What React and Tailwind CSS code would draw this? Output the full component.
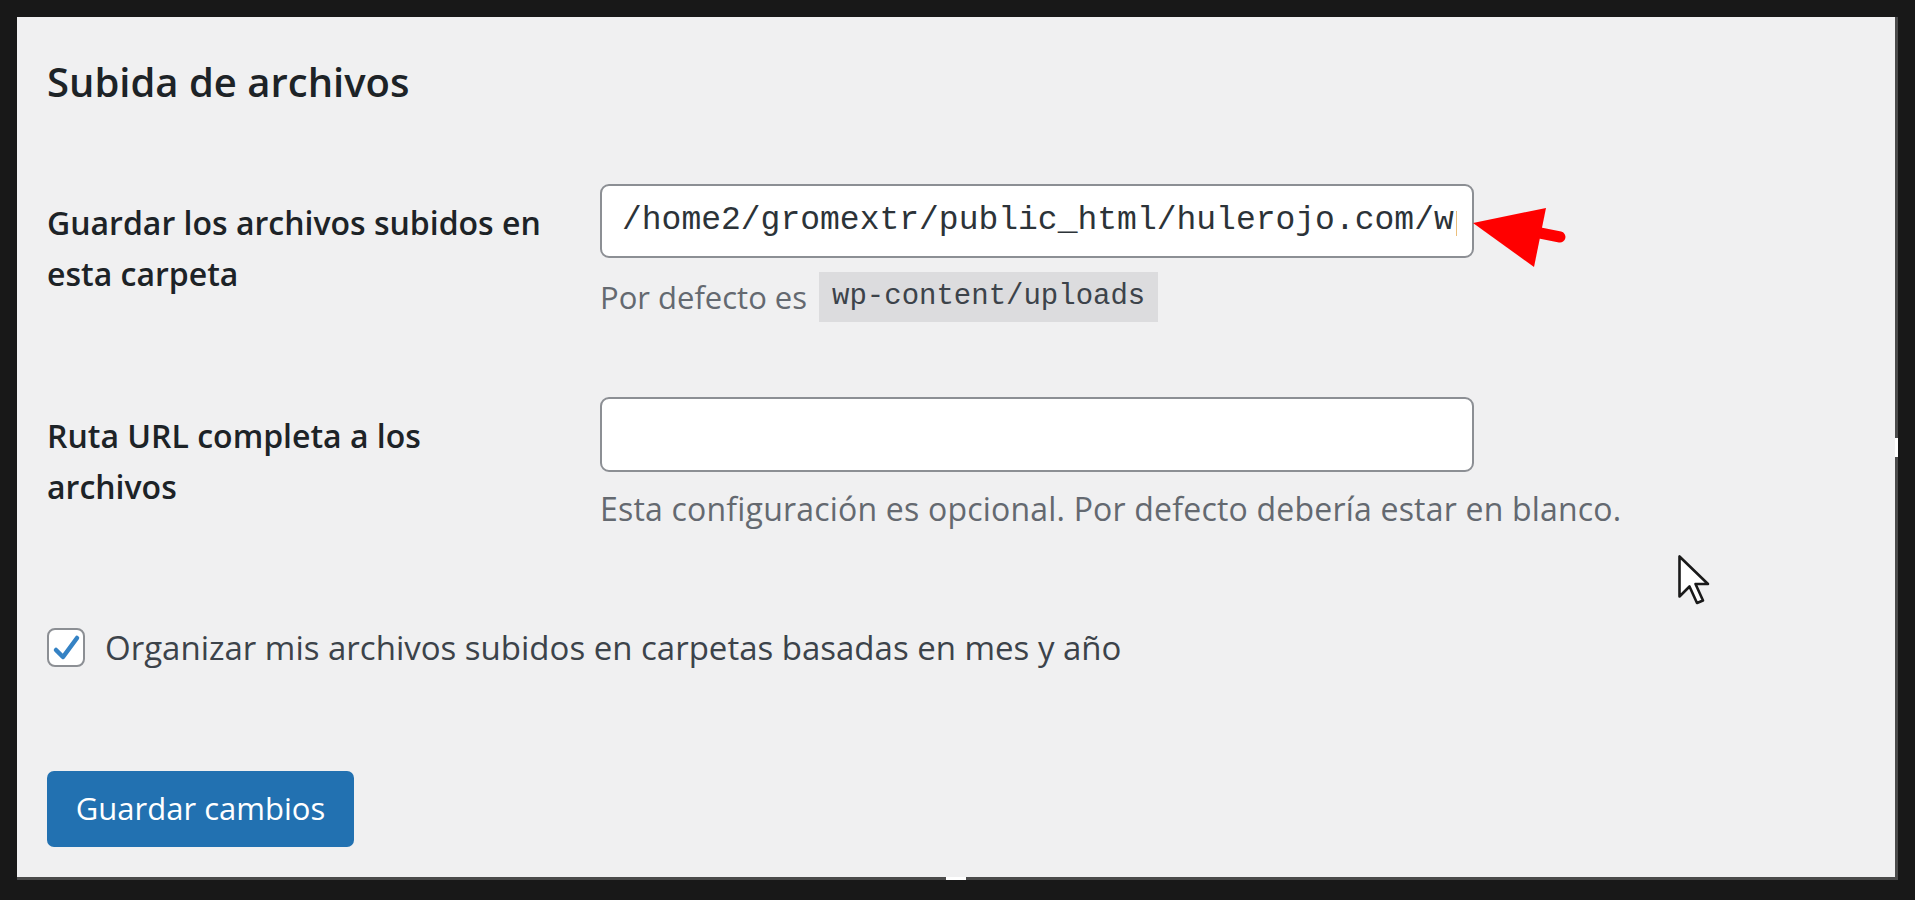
import React from "react";

const sans = { fontFamily: '"Open Sans", "Noto Sans", sans-serif' };
const mono = { fontFamily: '"Liberation Mono", monospace' };

const Arrow = () => (
  <svg className="absolute left-[1439px] top-[173px]" width="120" height="90" viewBox="0 0 120 90">
    <path d="M84 43 L104 47" stroke="#ff0000" strokeWidth="11" strokeLinecap="round" />
    <polygon points="17,33 90,18 78,77" fill="#ff0000" />
  </svg>
);

const Cursor = () => (
  <svg className="absolute left-[1660px] top-[537px]" width="34" height="52" viewBox="0 0 34 52">
    <path
      d="M2.5 2.5 L2.5 42.5 L12.5 32.5 L20 49 L26 46.5 L18.5 30 L31 30 Z"
      fill="#ffffff"
      stroke="#1a1a1a"
      strokeWidth="2.6"
      strokeLinejoin="round"
    />
  </svg>
);

export default function App() {
  return (
    <div className="min-h-screen bg-[#181818] pt-[17px] pl-[17px]" style={sans}>
      <div className="relative w-[1881px] h-[863px] bg-[#f0f0f1] border-r-[3px] border-b-[3px] border-[#4a4a4a] pl-[30px] pt-[39px]">
        <h2 className="text-[40px] leading-[52px] font-semibold text-[#1d2327]">Subida de archivos</h2>

        <div className="grid grid-cols-[553px_1fr] mt-[76px]">
          <div className="text-[32px] leading-[51px] font-semibold text-[#1d2327] pt-[13px] pr-[52px]">
            Guardar los archivos subidos en esta carpeta
          </div>
          <div>
            <div className="w-[874px] h-[74px] bg-white border-2 border-[#8c8f94] rounded-[9px] pl-[20px] flex items-center">
              <div className="w-[835px] overflow-hidden">
                <span className="whitespace-nowrap text-[33px] text-[#2c3338]" style={mono}>
                  /home2/gromextr/public_html/hulerojo.com/wp-content/uploads
                </span>
              </div>
            </div>
            <div className="mt-[14px] flex items-center text-[31px] leading-[50px] text-[#646970]">
              <span>Por defecto es</span>
              <code
                className="ml-[12px] bg-[#dcdcde] px-[13px] h-[50px] flex items-center text-[29px] text-[#3c434a]"
                style={mono}
              >
                wp-content/uploads
              </code>
            </div>
          </div>

          <div className="text-[32px] leading-[51px] font-semibold text-[#1d2327] pt-[13px] pr-[52px] mt-[75px]">
            Ruta URL completa a los archivos
          </div>
          <div className="mt-[75px]">
            <div className="w-[874px] h-[75px] bg-white border-2 border-[#8c8f94] rounded-[9px]" />
            <p className="mt-[12px] text-[32px] tracking-[0.2px] leading-[50px] text-[#646970]">
              Esta configuración es opcional. Por defecto debería estar en blanco.
            </p>
          </div>
        </div>

        <label className="mt-[89px] flex items-center gap-[20px] text-[33px] text-[#3c434a]">
          <span className="w-[38px] h-[39px] bg-white border-2 border-[#8c8f94] rounded-[8px] flex items-center justify-center">
            <svg width="34" height="35" viewBox="0 0 34 35">
              <path d="M7 20 L14 27 L28 8" fill="none" stroke="#3582c4" strokeWidth="4.5" strokeLinecap="round" strokeLinejoin="round" />
            </svg>
          </span>
          Organizar mis archivos subidos en carpetas basadas en mes y año
        </label>

        <button className="mt-[98px] w-[307px] h-[76px] bg-[#2271b1] rounded-[7px] text-white text-[31px]">
          Guardar cambios
        </button>

        <span className="absolute left-[929px] bottom-[-3px] w-[20px] h-[3px] bg-white" />
        <span className="absolute right-[-3px] top-[421px] w-[3px] h-[19px] bg-white" />

        <Arrow />
        <Cursor />
      </div>
    </div>
  );
}
